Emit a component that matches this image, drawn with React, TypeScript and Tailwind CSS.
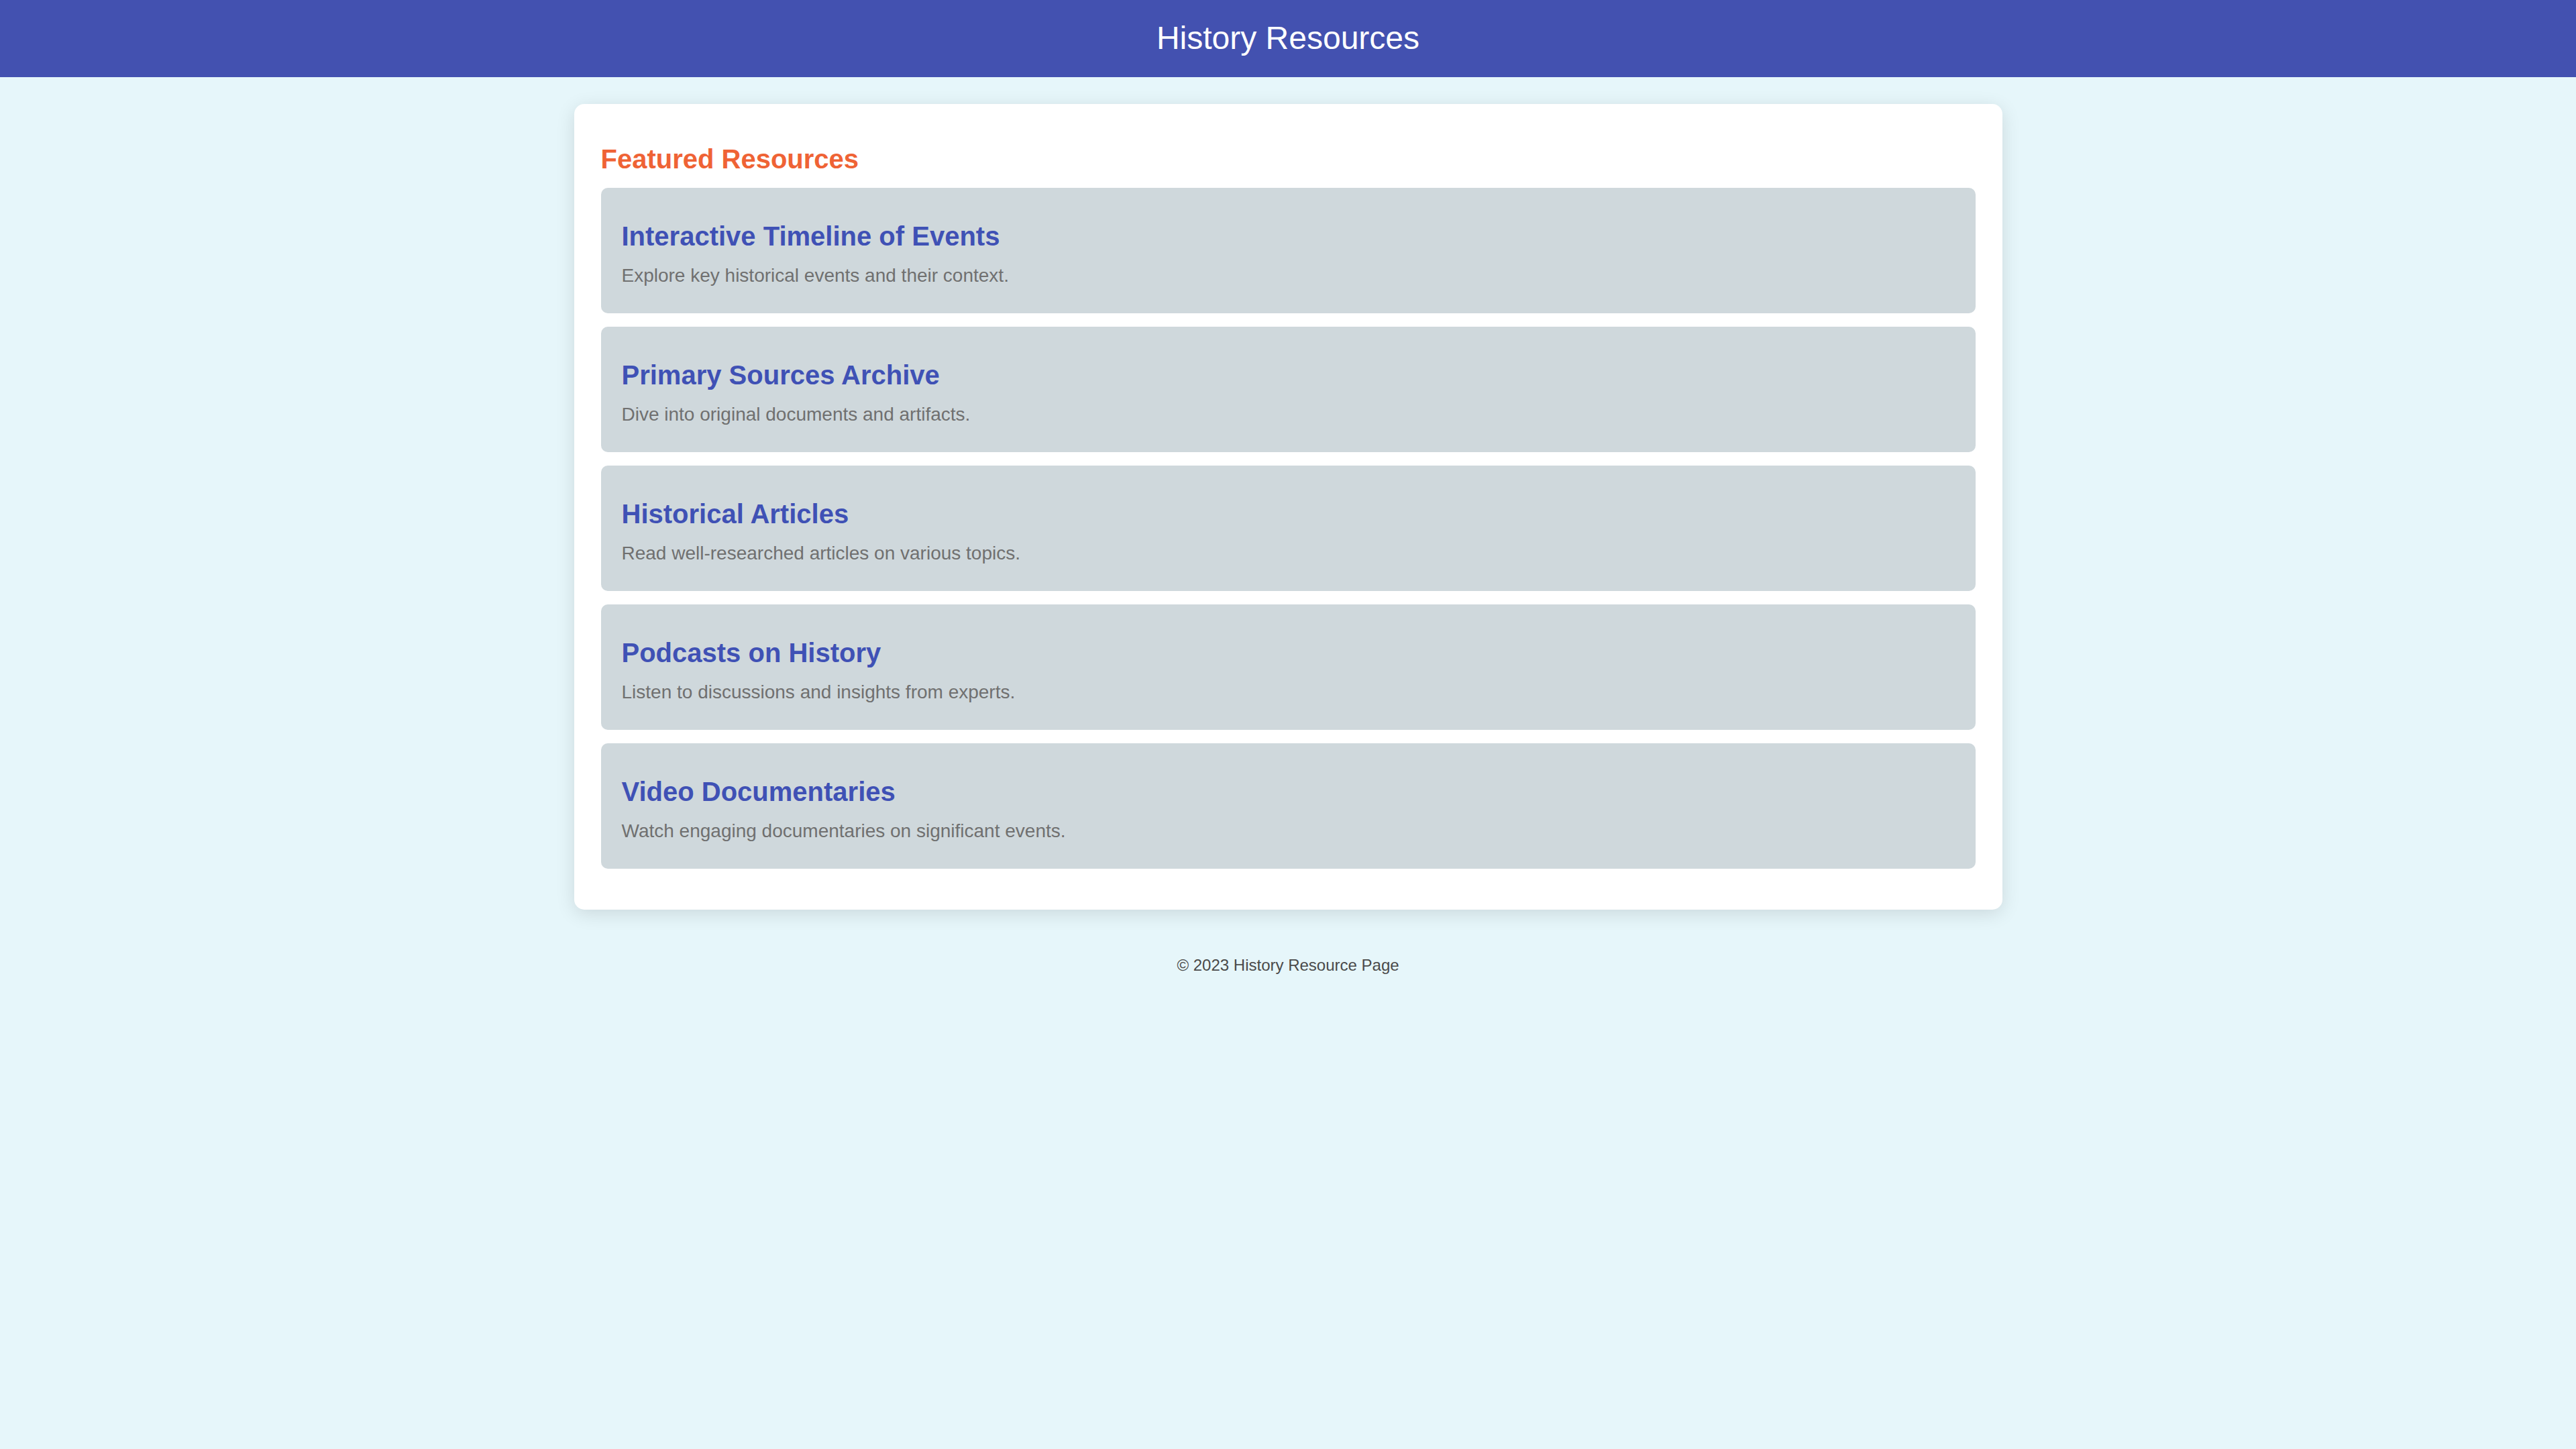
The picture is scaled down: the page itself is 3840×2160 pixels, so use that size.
const resources = [
  {
    title: "Interactive Timeline of Events",
    text: "Explore key historical events and their context.",
  },
  {
    title: "Primary Sources Archive",
    text: "Dive into original documents and artifacts.",
  },
  {
    title: "Historical Articles",
    text: "Read well-researched articles on various topics.",
  },
  {
    title: "Podcasts on History",
    text: "Listen to discussions and insights from experts.",
  },
  {
    title: "Video Documentaries",
    text: "Watch engaging documentaries on significant events.",
  },
];

export default function App() {
  return (
    <div className="min-h-screen bg-[#e6f6fa] font-['Liberation_Sans',Arial,sans-serif]">
      <header className="h-[115px] bg-[#4351b0] pt-[28px] text-center">
        <h1 className="text-[48px] leading-[57px] font-normal text-white">
          History Resources
        </h1>
      </header>

      <main className="mx-auto mt-[40px] w-[2129px] rounded-[15px] bg-white px-[40px] pt-[58px] pb-[61px] shadow-[0_6px_28px_rgba(0,0,0,0.12)]">
        <h2 className="mb-[19px] text-[40px] leading-[48px] font-bold text-[#ef6335]">
          Featured Resources
        </h2>

        <div className="flex flex-col gap-[20px]">
          {resources.map((item) => (
            <div
              key={item.title}
              className="rounded-[10px] bg-[#cfd8dc] px-[31px] pt-[48px] pb-[40px]"
            >
              <h3 className="mb-[19px] text-[40px] leading-[48px] font-bold text-[#3f51b5]">
                {item.title}
              </h3>
              <p className="text-[28px] leading-[32px] text-[#707070]">
                {item.text}
              </p>
            </div>
          ))}
        </div>
      </main>

      <footer className="mt-[69px] text-center text-[24px] leading-[28px] text-[#4a4a4a]">
        © 2023 History Resource Page
      </footer>
    </div>
  );
}
